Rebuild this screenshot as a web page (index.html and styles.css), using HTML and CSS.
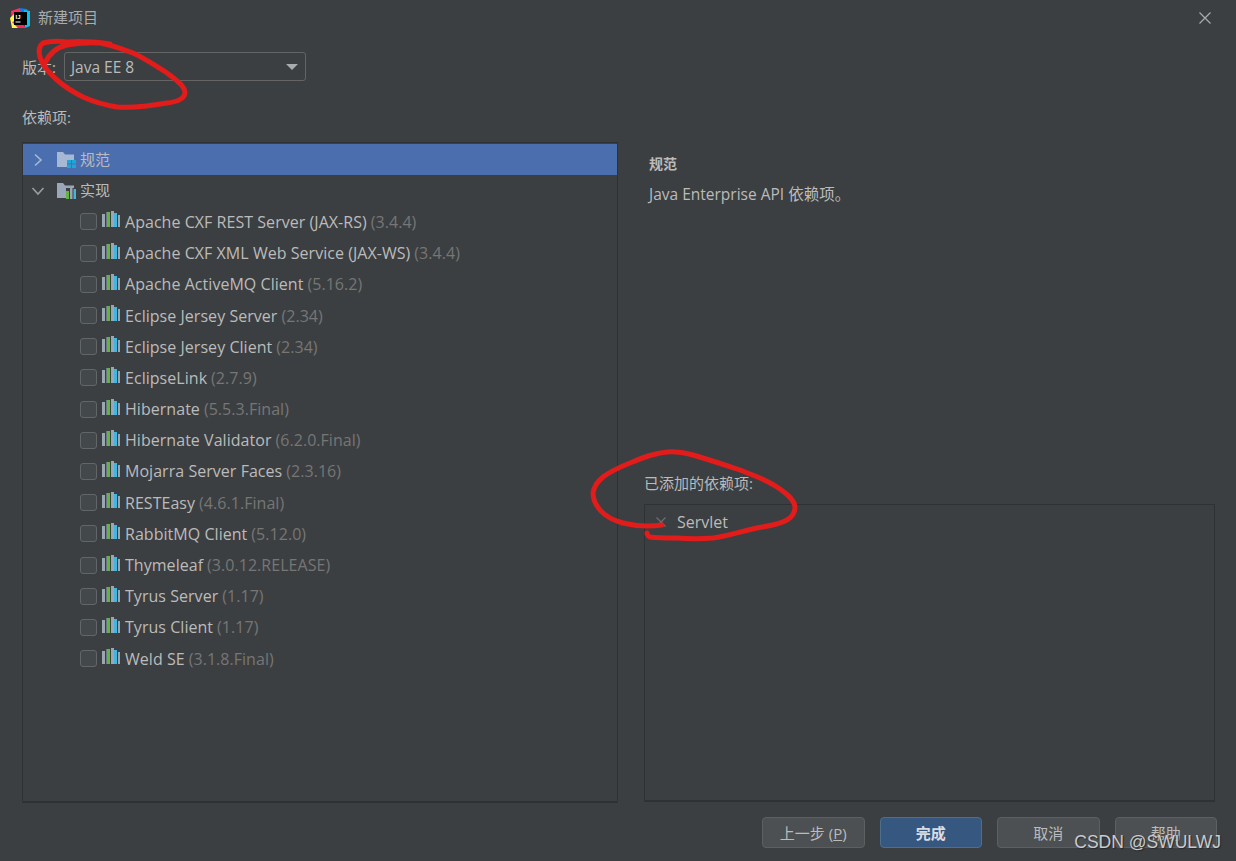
FILE: index.html
```html
<!DOCTYPE html>
<html lang="zh-CN">

<head>
    <meta charset="UTF-8">
    <title>新建项目</title>
    <link rel="stylesheet" href="styles.css">
</head>

<body>
    <svg class="defs" width="0" height="0">
        <symbol id="lib" viewBox="0 0 18 16">
            <rect x="0" y="3" width="3" height="13" fill="#9aa7b0"/>
            <rect x="4" y="1" width="1" height="15" fill="#6b7780"/>
            <rect x="5" y="1" width="3" height="15" fill="#62b543"/>
            <rect x="9" y="0" width="3" height="16" fill="#9aa7b0"/>
            <rect x="12" y="2" width="3" height="14" fill="#40b6e0"/>
            <rect x="16" y="4" width="2" height="12" fill="#9aa7b0"/>
        </symbol>
    </svg>

    <div class="dialog">
        <div class="title">
            <svg class="logo" viewBox="0 0 20 20" width="20" height="20">
                <polygon points="1,3 10,0 12,6 2,16" fill="#fe315d"/>
                <polygon points="9,0 17,1 20,8 14,8" fill="#087cfa"/>
                <polygon points="14,2 20,3 20,18 15,20" fill="#07c3f2"/>
                <polygon points="0,10 6,4 8,20 2,20" fill="#fcf84a"/>
                <polygon points="2,14 8,20 16,20 9,12" fill="#fe2857"/>
                <rect x="4" y="4" width="13" height="13" fill="#000"/>
                <text x="5.5" y="10.5" class="logo-text">IJ</text>
                <rect x="5.5" y="13.5" width="5" height="1" fill="#fff"/>
            </svg>
            <span class="title-text">新建项目</span>
            <svg class="close" viewBox="0 0 12 12" width="12" height="12">
                <path d="M0.5 0.5 L11.5 11.5 M11.5 0.5 L0.5 11.5" stroke="#a9abad" stroke-width="1.2" fill="none"/>
            </svg>
        </div>

        <div class="version">
            <span>版本:</span>
            <div class="combo">
                <span>Java EE 8</span>
                <i class="arrow"></i>
            </div>
        </div>

        <div class="deps-label">依赖项:</div>

        <div class="main">
            <div class="tree">
                <div class="row selected">
                    <svg class="chevron" viewBox="0 0 10 14" width="10" height="14"><path d="M2 1.5 L8 7 L2 12.5" fill="none" stroke="#a9b8d4" stroke-width="1.6"/></svg>
                    <svg class="folder" viewBox="0 0 19 16" width="19" height="16">
                        <path d="M0 0 H6 L8 2.5 H17 V8 H10 V15 H0 Z" fill="#a7b8d4"/>
                        <rect x="10" y="8" width="4" height="3.5" fill="#1fa6d8"/>
                        <rect x="15" y="8" width="4" height="3.5" fill="#1fa6d8"/>
                        <rect x="10" y="12.5" width="4" height="3.5" fill="#1fa6d8"/>
                        <rect x="15" y="12.5" width="4" height="3.5" fill="#1fa6d8"/>
                    </svg>
                    <span class="group">规范</span>
                </div>
                <div class="row">
                    <svg class="chevron" viewBox="0 0 14 10" width="14" height="10"><path d="M1.5 2 L7 8 L12.5 2" fill="none" stroke="#9a9da0" stroke-width="1.6"/></svg>
                    <svg class="folder" viewBox="0 0 19 16" width="19" height="16">
                        <path d="M0 0 H6 L8 2.5 H17 V5 H9 V15 H0 Z" fill="#9aa7b8"/>
                        <rect x="9" y="8" width="3" height="8" fill="#62b543"/>
                        <rect x="13" y="4" width="2.5" height="12" fill="#9aa7b0"/>
                        <rect x="16.5" y="6" width="2.5" height="10" fill="#40b6e0"/>
                    </svg>
                    <span class="group">实现</span>
                </div>
                <div class="row item"><i class="check"></i><svg class="lib"><use href="#lib"/></svg><span>Apache CXF REST Server (JAX-RS)</span><em>(3.4.4)</em></div>
                <div class="row item"><i class="check"></i><svg class="lib"><use href="#lib"/></svg><span>Apache CXF XML Web Service (JAX-WS)</span><em>(3.4.4)</em></div>
                <div class="row item"><i class="check"></i><svg class="lib"><use href="#lib"/></svg><span>Apache ActiveMQ Client</span><em>(5.16.2)</em></div>
                <div class="row item"><i class="check"></i><svg class="lib"><use href="#lib"/></svg><span>Eclipse Jersey Server</span><em>(2.34)</em></div>
                <div class="row item"><i class="check"></i><svg class="lib"><use href="#lib"/></svg><span>Eclipse Jersey Client</span><em>(2.34)</em></div>
                <div class="row item"><i class="check"></i><svg class="lib"><use href="#lib"/></svg><span>EclipseLink</span><em>(2.7.9)</em></div>
                <div class="row item"><i class="check"></i><svg class="lib"><use href="#lib"/></svg><span>Hibernate</span><em>(5.5.3.Final)</em></div>
                <div class="row item"><i class="check"></i><svg class="lib"><use href="#lib"/></svg><span>Hibernate Validator</span><em>(6.2.0.Final)</em></div>
                <div class="row item"><i class="check"></i><svg class="lib"><use href="#lib"/></svg><span>Mojarra Server Faces</span><em>(2.3.16)</em></div>
                <div class="row item"><i class="check"></i><svg class="lib"><use href="#lib"/></svg><span>RESTEasy</span><em>(4.6.1.Final)</em></div>
                <div class="row item"><i class="check"></i><svg class="lib"><use href="#lib"/></svg><span>RabbitMQ Client</span><em>(5.12.0)</em></div>
                <div class="row item"><i class="check"></i><svg class="lib"><use href="#lib"/></svg><span>Thymeleaf</span><em>(3.0.12.RELEASE)</em></div>
                <div class="row item"><i class="check"></i><svg class="lib"><use href="#lib"/></svg><span>Tyrus Server</span><em>(1.17)</em></div>
                <div class="row item"><i class="check"></i><svg class="lib"><use href="#lib"/></svg><span>Tyrus Client</span><em>(1.17)</em></div>
                <div class="row item"><i class="check"></i><svg class="lib"><use href="#lib"/></svg><span>Weld SE</span><em>(3.1.8.Final)</em></div>
            </div>

            <div class="side">
                <div class="desc">
                    <h3>规范</h3>
                    <p>Java Enterprise API 依赖项。</p>
                </div>
                <div class="added-label">已添加的依赖项:</div>
                <div class="added">
                    <div class="added-row">
                        <svg viewBox="0 0 10 10" width="10" height="10"><path d="M0.5 0.5 L9.5 9.5 M9.5 0.5 L0.5 9.5" stroke="#6e7174" stroke-width="1.1" fill="none"/></svg>
                        <span>Servlet</span>
                    </div>
                </div>
            </div>
        </div>

        <div class="buttons">
            <button class="btn">上一步 (<u>P</u>)</button>
            <button class="btn primary">完成</button>
            <button class="btn">取消</button>
            <button class="btn">帮助</button>
        </div>
    </div>

    <!-- red marker annotations drawn on top of the screenshot -->
    <svg class="marks" viewBox="0 0 1236 861" width="1236" height="861">
        <path d="M45 63 C50 52 58 47 67 45 C80 43 90 42 100 43 C112 45 122 49 133 53 C146 59 156 66 167 73 C176 80 185 86 185 93 C184 100 176 102 167 103 C150 106 134 108 117 107 C105 105 94 102 83 97 C73 92 65 87 57 80 C49 73 42 66 40 57 C38 50 39 46 43 43 C50 41 58 41 67 42 C80 41 95 42 110 44"/>
        <path d="M662 525 C648 527 635 526 623 523 C612 520 605 516 600 510 C595 504 593 499 593 493 C594 486 598 481 603 477 C611 471 620 467 630 463 C642 458 654 453 667 452 C677 451 685 453 693 455 C710 460 725 465 740 470 C753 475 767 480 777 487 C786 493 794 499 795 507 C795 513 792 517 787 520 C778 525 768 526 757 528 C742 531 728 536 713 538 C701 539 689 539 677 538 C668 538 658 538 650 537 C648 536 647 535 647 533"/>
    </svg>

    <div class="watermark">CSDN @SWULWJ</div>
</body>

</html>
```

FILE: styles.css
```css
* {
    box-sizing: border-box;
}

body {
    margin: 0;
    width: 1236px;
    height: 861px;
    overflow: hidden;
    position: relative;
    background: #3c3f41;
    color: #bbbbbb;
    font-family: "Open Sans", "Noto Sans CJK SC", sans-serif;
    font-size: 15px;
}

.defs {
    position: absolute;
}

.dialog {
    height: 861px;
    display: flex;
    flex-direction: column;
}

.title {
    height: 36px;
    display: flex;
    align-items: center;
    padding: 0 25px 0 10px;
    font-size: 15px;
    color: #a9abad;
}

.title-text {
    margin-bottom: 4px;
}

.logo {
    margin-right: 8px;
}

.logo-text {
    font-family: "Liberation Sans", sans-serif;
    font-size: 6px;
    font-weight: bold;
    fill: #fff;
}

.close {
    margin-left: auto;
}

.version {
    height: 29px;
    margin-top: 16px;
    padding-left: 22px;
    display: flex;
    align-items: center;
    gap: 8px;
    font-size: 15px;
}

.combo {
    width: 242px;
    height: 29px;
    padding: 0 7px 0 6px;
    display: flex;
    align-items: center;
    justify-content: space-between;
    border: 1px solid #646464;
    border-radius: 3px;
    font-size: 15.5px;
}

.arrow {
    width: 0;
    height: 0;
    border-left: 6px solid transparent;
    border-right: 6px solid transparent;
    border-top: 6px solid #a9abad;
}

.deps-label {
    height: 20px;
    margin-top: 26px;
    padding-left: 22px;
    font-size: 15px;
    line-height: 20px;
}

.main {
    height: 661px;
    margin-top: 15px;
    padding-left: 22px;
    display: flex;
}

.tree {
    width: 596px;
    padding-top: 1px;
    border: 1px solid #2f3133;
    border-bottom-width: 2px;
}

.row {
    height: 31.2px;
    display: flex;
    align-items: center;
    white-space: nowrap;
    font-size: 15px;
}

.row.selected {
    background: #4b6eaf;
}

.group {
    margin-bottom: 2px;
}

.chevron {
    margin-left: 8px;
    width: 14px;
}

.folder {
    margin-left: 12px;
    margin-right: 4px;
}

.item {
    padding-left: 57px;
    font-size: 16px;
    letter-spacing: 0.04px;
}

.check {
    width: 17px;
    height: 17px;
    border: 1.5px solid #636668;
    border-radius: 3px;
    background: #43494a;
}

.lib {
    width: 18px;
    height: 16px;
    margin: 0 5px 5px 5px;
}

.item em {
    margin-left: 4px;
    font-style: normal;
    color: #767676;
}

.side {
    flex: 1;
    padding-left: 26px;
    display: flex;
    flex-direction: column;
}

.desc {
    height: 332px;
    padding-left: 5px;
}

.desc h3 {
    margin: 12px 0 0;
    font-size: 14px;
    font-weight: bold;
    line-height: 20px;
}

.desc p {
    margin: 10px 0 0;
    font-size: 15.5px;
    line-height: 20px;
}

.added-label {
    height: 30px;
    font-size: 15px;
    line-height: 18px;
}

.added {
    width: 571px;
    height: 298px;
    border: 1px solid #2f3133;
    border-bottom-width: 2px;
}

.added-row {
    height: 34px;
    padding-left: 11px;
    display: flex;
    align-items: center;
    gap: 11px;
    font-size: 16px;
}

.buttons {
    margin-top: 14px;
    padding-right: 19px;
    display: flex;
    justify-content: flex-end;
    gap: 15px;
}

.btn {
    width: 102.5px;
    height: 31px;
    padding: 0;
    border: 1.5px solid #5e6060;
    border-radius: 4px;
    background: #4c5052;
    color: #bbbbbb;
    font-family: inherit;
    font-size: 15px;
}

.btn.primary {
    background: #365880;
    border-color: #4c708c;
    color: #d8dde3;
    font-weight: bold;
}

.marks {
    position: absolute;
    top: 0;
    left: 0;
    pointer-events: none;
}

.marks path {
    fill: none;
    stroke: #e21b1b;
    stroke-width: 5;
    stroke-linecap: round;
    stroke-linejoin: round;
}

.watermark {
    position: absolute;
    right: 15px;
    bottom: 8px;
    font-family: "Liberation Sans", sans-serif;
    font-size: 17.5px;
    color: #c9cbcd;
    text-shadow: 1px 1px 1px #26282a;
}
```
